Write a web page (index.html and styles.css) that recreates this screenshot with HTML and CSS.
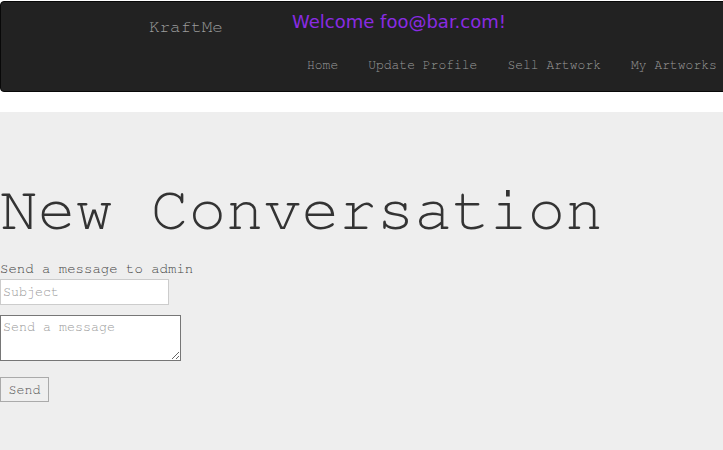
FILE: index.html
```html
<!DOCTYPE html>
<html>
<head>
<meta charset="utf-8">
<link rel="stylesheet" href="styles.css">
</head>
<body>
<header class="navbar">
  <div class="brand">KraftMe</div>
  <div class="nav-side">
    <div class="welcome">Welcome foo@bar.com!</div>
    <ul class="nav-links">
      <li>Home</li>
      <li>Update Profile</li>
      <li>Sell Artwork</li>
      <li>My Artworks</li>
    </ul>
  </div>
</header>
<main class="content">
  <h1 class="title">New Conversation</h1>
  <form class="msg-form">
    <div class="label">Send a message to admin</div>
    <input class="subject" type="text" placeholder="Subject">
    <textarea class="message" placeholder="Send a message"></textarea>
    <button class="send" type="button">Send</button>
  </form>
</main>
</body>
</html>
```

FILE: styles.css
```css
html, body {
  margin: 0;
  padding: 0;
  background: #fff;
  overflow: hidden;
  height: 100%;
}
body {
  font-family: FreeMono, "Liberation Mono", monospace;
  color: #333;
}
.navbar {
  box-sizing: border-box;
  margin-top: 1px;
  height: 91px;
  width: calc(100% + 20px);
  background: #222;
  border: 1px solid #080808;
  border-radius: 4px;
  display: flex;
  margin-bottom: 20px;
}
.brand {
  margin-left: 148px;
  width: 143px;
  padding-top: 15px;
  font-size: 17.6px;
  line-height: 20px;
  color: #9d9d9d;
}
.nav-side {
  display: flex;
  flex-direction: column;
}
.welcome {
  font-family: "DejaVu Sans", sans-serif;
  font-size: 18px;
  line-height: 21px;
  color: #8a2be2;
  padding-top: 9px;
}
.nav-links {
  list-style: none;
  margin: 0;
  padding: 0;
  margin-top: 26px;
  display: flex;
  font-size: 13px;
  line-height: 15px;
  color: #9d9d9d;
  white-space: nowrap;
}
.nav-links li {
  padding: 0 15px;
}
.content {
  box-sizing: border-box;
  background: #eee;
  height: 338px;
  padding-top: 64px;
}
.title {
  margin: 0 0 15px;
  font-weight: normal;
  font-size: 62.8px;
  line-height: 70px;
  color: #333;
}
.msg-form {
  display: flex;
  flex-direction: column;
  align-items: flex-start;
}
.label {
  font-size: 14px;
  line-height: 16px;
  color: #444;
}
.subject {
  box-sizing: border-box;
  margin: 2px 0 0;
  width: 169px;
  height: 26px;
  border: 1px solid #ccc;
  padding: 0 2px;
  font-family: FreeMono, monospace;
  font-size: 13.33px;
  background: #fff;
}
.message {
  box-sizing: border-box;
  margin: 10px 0 0;
  width: 181px;
  height: 46px;
  border: 1px solid #767676;
  padding: 4px 2px 2px;
  font-family: FreeMono, monospace;
  font-size: 13.33px;
  background: #fff;
}
.subject::placeholder, .message::placeholder {
  color: #999;
}
.send {
  margin-top: 16px;
  box-sizing: border-box;
  height: 25px;
  width: 49px;
  padding: 0;
  border: 1px solid #aaa;
  background: #efefef;
  font-family: FreeMono, monospace;
  font-size: 13.33px;
  color: #555;
}
```
